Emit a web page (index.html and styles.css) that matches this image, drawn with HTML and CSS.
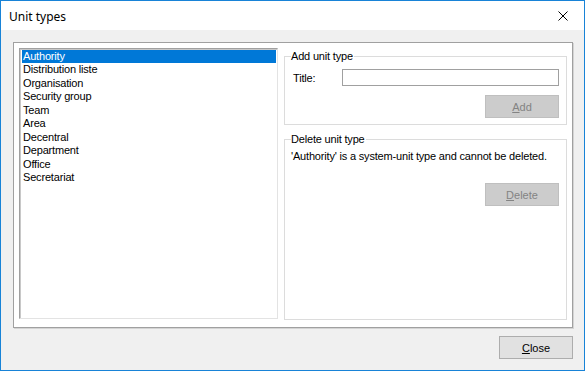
FILE: index.html
```html
<!DOCTYPE html>
<html lang="en">
<head>
    <meta charset="UTF-8">
    <title>Unit types</title>
    <link rel="stylesheet" href="styles.css">
</head>
<body>
    <div class="window">
        <div class="titlebar">
            <span class="title">Unit types</span>
            <button class="close-x" aria-label="Close">
                <svg width="10" height="10" viewBox="0 0 10 10">
                    <path d="M0.5 0.5 L9.5 9.5 M9.5 0.5 L0.5 9.5" stroke="#000" stroke-width="1" fill="none"/>
                </svg>
            </button>
        </div>

        <div class="content">
            <div class="panel">
                <ul class="unit-list">
                    <li class="selected">Authority</li>
                    <li>Distribution liste</li>
                    <li>Organisation</li>
                    <li>Security group</li>
                    <li>Team</li>
                    <li>Area</li>
                    <li>Decentral</li>
                    <li>Department</li>
                    <li>Office</li>
                    <li>Secretariat</li>
                </ul>

                <div class="side">
                    <fieldset class="group group-add">
                        <legend>Add unit type</legend>
                        <div class="title-row">
                            <label for="unitTitle">Title:</label>
                            <input type="text" id="unitTitle">
                        </div>
                        <div class="actions">
                            <button class="btn" disabled><u>A</u>dd</button>
                        </div>
                    </fieldset>

                    <fieldset class="group group-delete">
                        <legend>Delete unit type</legend>
                        <p class="message">'Authority' is a system-unit type and cannot be deleted.</p>
                        <div class="actions">
                            <button class="btn" disabled><u>D</u>elete</button>
                        </div>
                    </fieldset>
                </div>
            </div>

            <div class="footer">
                <button class="btn btn-close"><u>C</u>lose</button>
            </div>
        </div>
    </div>
</body>
</html>
```

FILE: styles.css
```css
* {
    margin: 0;
    padding: 0;
    box-sizing: border-box;
}

body {
    background: #ffffff;
    font-family: 'Liberation Sans', Arial, sans-serif;
    font-size: 11px;
    letter-spacing: -0.18px;
    color: #000;
}

.window {
    width: 585px;
    height: 371px;
    border: 1px solid #1883d7;
    background: #f0f0f0;
    display: flex;
    flex-direction: column;
}

/* Barra de titulo */
.titlebar {
    height: 29px;
    background: #ffffff;
    display: flex;
    align-items: center;
    justify-content: space-between;
    padding: 0 16px 0 8px;
}

.title {
    font-family: 'Noto Sans', 'Open Sans', sans-serif;
    font-size: 12px;
    letter-spacing: 0;
    color: #000;
    padding-top: 1px;
}

.close-x {
    border: none;
    background: none;
    width: 10px;
    height: 10px;
    display: flex;
    margin-top: 1px;
}

.content {
    flex: 1;
    padding: 12px 11px 0 12px;
    display: flex;
    flex-direction: column;
}

.panel {
    height: 286px;
    background: #ffffff;
    border: 1px solid #a0a0a0;
    box-shadow: 1px 1px 0 #d4d4d4;
    padding: 5px 5px 0 5px;
    display: grid;
    grid-template-columns: 259px 1fr;
    gap: 6px;
    align-items: start;
}

/* Lista de tipos */
.unit-list {
    list-style: none;
    height: 271px;
    border: 1px solid;
    border-color: #a0a0a0 #e3e3e3 #e3e3e3 #a0a0a0;
    box-shadow: inset 1px 1px 0 #c8c8c8;
    padding: 1px 1px 0 2px;
}

.unit-list li {
    height: 13.44px;
    line-height: 13px;
    padding-left: 1px;
    white-space: nowrap;
}

.unit-list li.selected {
    background: #0078d7;
    color: #ffffff;
}

.side {
    height: 272px;
    display: flex;
    flex-direction: column;
    padding-top: 2px;
}

.group {
    border: 1px solid #dcdcdc;
    padding: 0 7px 6px 6px;
}

.group legend {
    padding: 0 1px 0 0;
    line-height: 13px;
}

.group-add {
    padding-top: 6px;
}

.group-delete {
    flex: 1;
    margin-top: 8px;
    padding-top: 4px;
}

.title-row {
    display: flex;
    align-items: center;
}

.title-row label {
    width: 51px;
    padding-left: 2px;
}

.title-row input {
    flex: 1;
    height: 17px;
    border: 1px solid #a0a0a0;
    outline: none;
    font: inherit;
    padding: 0 2px;
}

.actions {
    display: flex;
    justify-content: flex-end;
}

.group-add .actions {
    margin-top: 9px;
}

.message {
    line-height: 13px;
}

.group-delete .actions {
    margin-top: 20px;
}

.btn {
    width: 74px;
    height: 23px;
    font: inherit;
    background: #e1e1e1;
    border: 1px solid #adadad;
    color: #000;
}

.btn:disabled {
    background: #cccccc;
    border-color: #bfbfbf;
    color: #838383;
}

.footer {
    display: flex;
    justify-content: flex-end;
    padding-top: 8px;
}

.btn-close {
    width: 74px;
    height: 23px;
}
```
